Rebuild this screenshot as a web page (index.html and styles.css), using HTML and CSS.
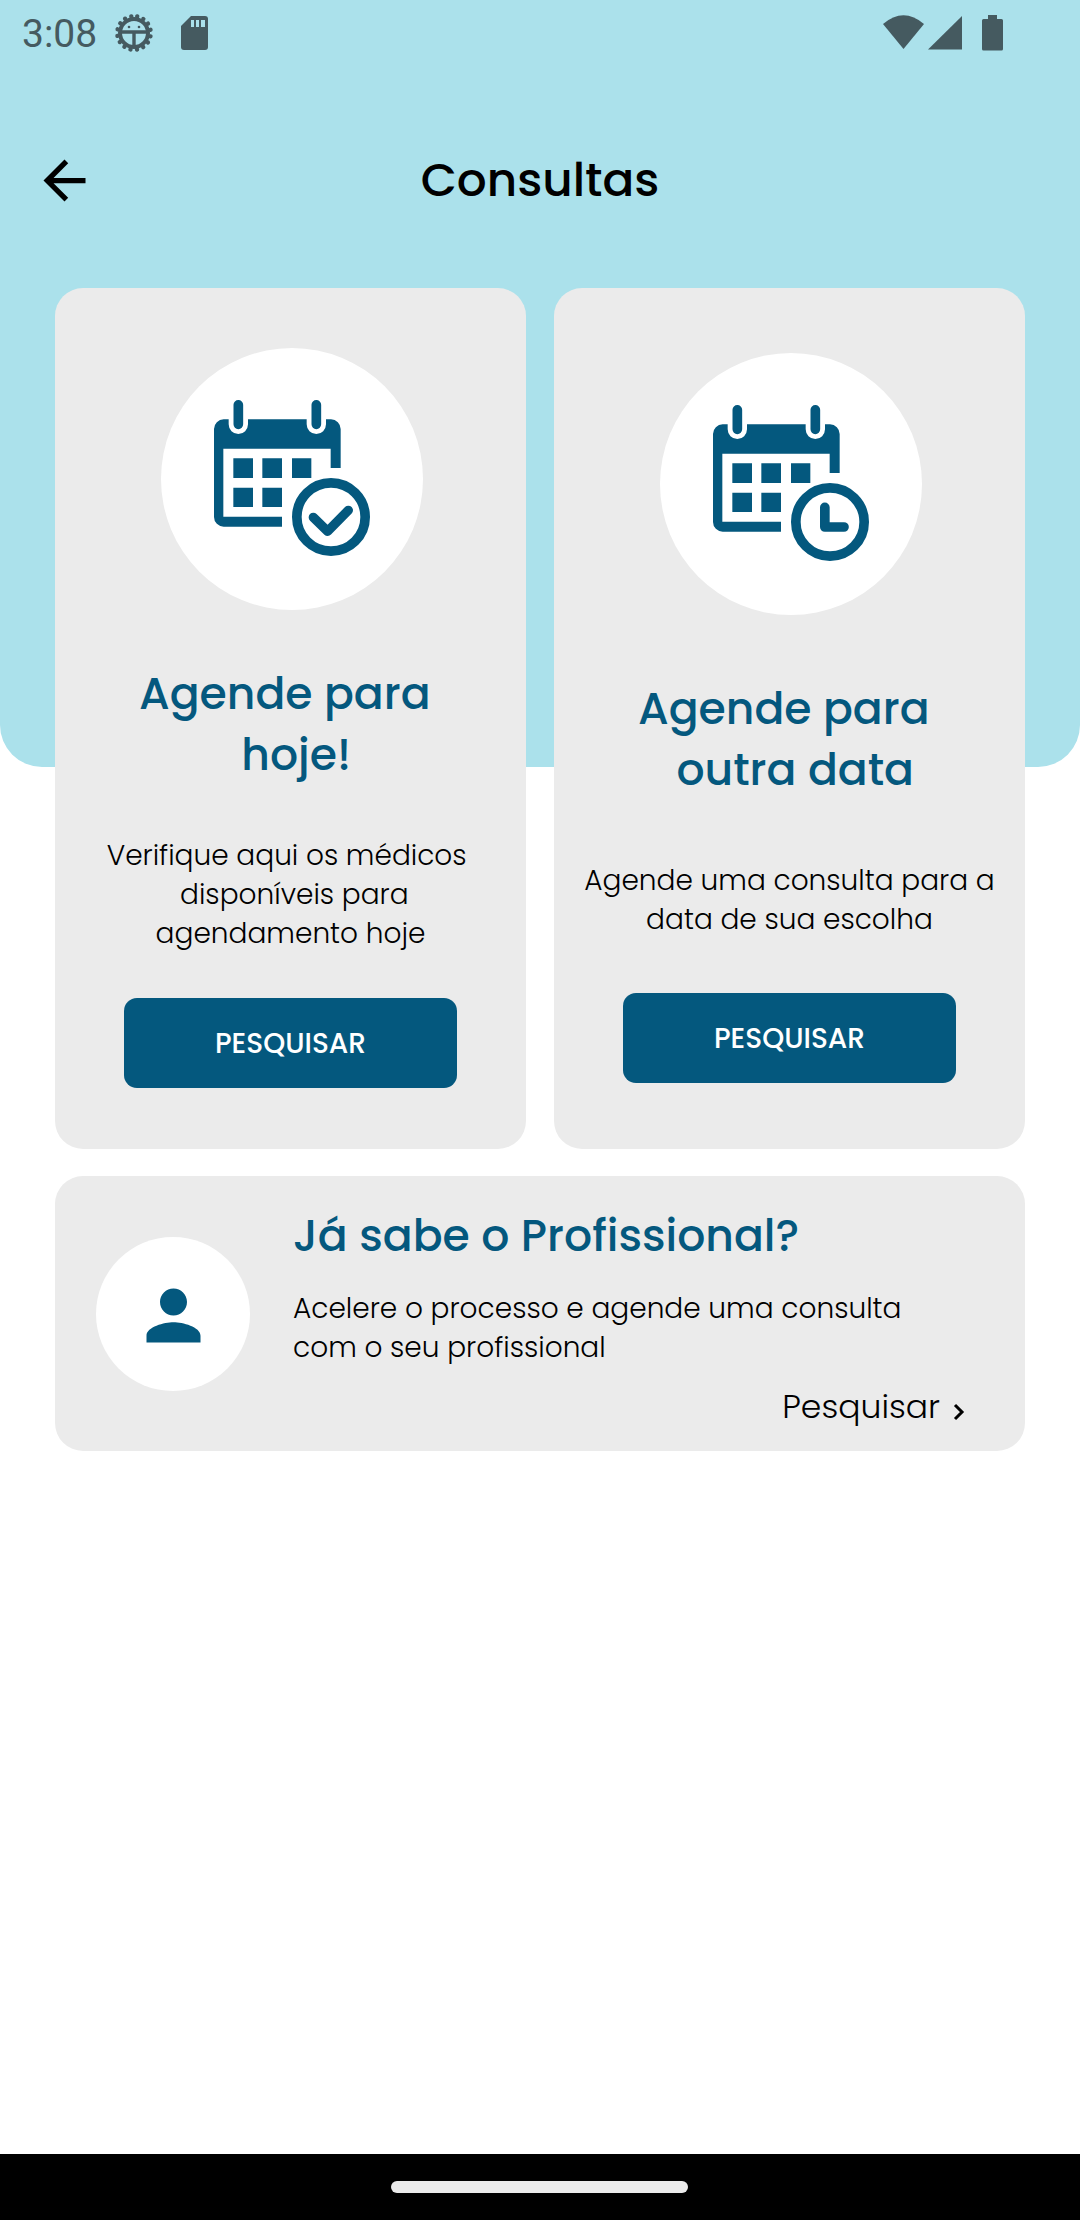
FILE: index.html
```html
<!DOCTYPE html>
<html lang="pt-BR">
<head>
<meta charset="utf-8">
<title>Consultas</title>
<link rel="stylesheet" href="styles.css">
</head>
<body>
<svg width="0" height="0" class="defs" aria-hidden="true">
  <defs>
    <g id="calendar">
      <path fill="#04587e" d="M220 238H542a29 29 0 0 1 29 29V384H541V326H219V530H395V560H220a29 29 0 0 1-29-29V267a29 29 0 0 1 29-29z"/>
      <g stroke="#fff" stroke-width="58" stroke-linecap="round"><path d="M264 190V253M498 190V253"/></g>
      <g stroke="#04587e" stroke-width="29" stroke-linecap="round"><path d="M264 194.500V253M498 194.500V253"/></g>
      <path fill="#04587e" d="M249 355h59v59h-59zM336 355h59v59h-59zM425 355h58v59h-58zM249 443h59v58h-59zM336 443h59v58h-59z"/>
      <circle cx="542" cy="531" r="102.500" fill="#fff" stroke="#04587e" stroke-width="29"/>
    </g>
  </defs>
</svg>
<div class="screen">
  <div class="backdrop"></div>
  <header class="status">
    <span class="time">3:08</span>
    <svg class="gear" viewBox="-20 -20 40 40" width="40" height="40">
      <circle r="16.800" fill="none" stroke="#455a60" stroke-width="4.400" stroke-linecap="round" stroke-dasharray="0.010 6.588" transform="rotate(-79)"/>
      <circle r="14" fill="none" stroke="#455a60" stroke-width="4"/>
      <path d="M-14-1H14M0-1V14" stroke="#455a60" stroke-width="3.400" fill="none"/>
      <circle cx="-5" cy="-6" r="1.300" fill="#455a60"/><circle cx="5" cy="-6" r="1.300" fill="#455a60"/>
    </svg>
    <svg class="sd" viewBox="0 0 27 34" width="27" height="34">
      <path fill="#455a60" d="M10 0H24a3 3 0 0 1 3 3V31a3 3 0 0 1-3 3H3a3 3 0 0 1-3-3V10z"/>
      <path fill="#abe1eb" d="M10 4h3v7h-3zM15 4h3v7h-3zM20 4h4v7h-4z"/>
    </svg>
    <svg class="signals" viewBox="883 15 121 36" width="121" height="36">
      <g fill="#455a60"><path d="M883 24Q903.500 6.500 924 24L903.500 49z"/><path d="M928 49.500L962 16V49.500z"/><path d="M988 15h9v4h4.500a1.500 1.500 0 0 1 1.500 1.500V49a1.500 1.500 0 0 1-1.500 1.500h-18A1.500 1.500 0 0 1 982 49V20.500a1.500 1.500 0 0 1 1.500-1.500H988z"/></g>
    </svg>
  </header>
  <div class="topbar">
    <svg viewBox="0 0 24 24" width="63" height="63"><path d="M20 11H7.830l5.590-5.590L12 4l-8 8 8 8 1.410-1.410L7.830 13H20v-2z"/></svg>
    <h1>Consultas</h1>
  </div>
  <main class="content">
    <div class="cards">
      <section class="card today">
        <div class="round">
          <svg viewBox="32 24 786 786" width="262" height="262"><use href="#calendar"/><path d="M489 532L532 574L594 511" fill="none" stroke="#04587e" stroke-width="28" stroke-linecap="round" stroke-linejoin="round"/></svg>
        </div>
        <h2>Agende para 
 hoje!</h2>
        <p>Verifique aqui os médicos 
 disponíveis para
agendamento hoje</p>
        <button>PESQUISAR</button>
      </section>
      <section class="card other">
        <div class="round">
          <svg viewBox="32 24 786 786" width="262" height="262"><use href="#calendar"/><path d="M526.500 487V546H584" fill="none" stroke="#04587e" stroke-width="29" stroke-linecap="round" stroke-linejoin="round"/></svg>
        </div>
        <h2>Agende para 
 outra data</h2>
        <p>Agende uma consulta para a
data de sua escolha</p>
        <button>PESQUISAR</button>
      </section>
    </div>
    <section class="professional">
      <div class="avatar">
        <svg viewBox="0 0 24 24" width="81" height="81"><path fill="#04587e" d="M12 12c2.210 0 4-1.790 4-4s-1.790-4-4-4-4 1.790-4 4 1.790 4 4 4zm0 2c-2.670 0-8 1.340-8 4v2h16v-2c0-2.660-5.330-4-8-4z"/></svg>
      </div>
      <div class="info">
        <h2>Já sabe o Profissional?</h2>
        <p>Acelere o processo e agende uma consulta
com o seu profissional</p>
        <a class="link">Pesquisar<svg viewBox="0 0 12 18" width="12" height="18"><path d="M2 2L9 9L2 16" fill="none" stroke="#000" stroke-width="3"/></svg></a>
      </div>
    </section>
  </main>
  <footer class="nav"><div class="pill"></div></footer>
</div>
</body>
</html>
```
FILE: styles.css
```css
* { box-sizing: border-box; margin: 0; padding: 0; }
body { background: #fff; color: #000; font-family: Poppins, Inter, "Open Sans", sans-serif; }
svg { display: block; flex: none; }
.defs { position: absolute; }
.screen { position: relative; width: 1080px; height: 2220px; display: flex; flex-direction: column; overflow: hidden; }
.backdrop { position: absolute; inset: 0 0 auto; height: 767px; background: #abe1eb; border-radius: 0 0 42px 42px; z-index: -1; }
.status { height: 100px; padding: 11px 76px 0 22px; display: flex; align-items: flex-start; }
.time { width: 92px; font: 400 39px/46px Roboto, sans-serif; color: #455a60; }
.gear { margin-top: 2px; }
.sd { margin: 5px 0 0 27px; }
.signals { margin: 4px 0 0 auto; }
.topbar { height: 188px; padding: 49px 33px 0; display: grid; grid-template-columns: 63px 1fr 63px; align-items: start; }
h1 { font-size: 46.900px; font-weight: 500; line-height: 62px; text-align: center; }
.content { padding: 0 55px; flex: 1; }
.cards { display: grid; grid-template-columns: 471px 471px; gap: 28px; }
.card { height: 861px; border-radius: 28px; background: #ebebeb; display: flex; flex-direction: column; align-items: center; text-align: center; }
.round { width: 262px; height: 262px; margin-left: 2px; border-radius: 50%; background: #fff; }
.today { padding-top: 60px; }
.other { padding-top: 65px; }
h2 { font-size: 44.100px; font-weight: 500; line-height: 61px; color: #04587e; white-space: pre; }
p { font-size: 28px; font-weight: 300; line-height: 39px; white-space: pre; }
.today h2 { margin: 53px 0 51px; }
.other h2 { margin: 63px 0 61px; }
button { width: 333px; height: 90px; padding-top: 1px; border: 0; border-radius: 13px; background: #04587e; color: #fff; font: 500 28px/90px Poppins, Inter, sans-serif; }
.today button { margin-top: 45px; }
.other button { margin-top: 54px; }
.professional { margin-top: 27px; height: 275px; border-radius: 28px; background: #ebebeb; padding: 0 60px 0 41px; display: flex; gap: 43px; }
.avatar { flex: none; margin-top: 61px; padding-top: 2px; width: 154px; height: 154px; border-radius: 50%; background: #fff; display: grid; place-items: center; }
.info { flex: 1; padding-top: 29px; display: flex; flex-direction: column; }
.info p { margin-top: 23px; }
.link { margin-top: 18px; display: flex; justify-content: flex-end; align-items: center; gap: 13px; font-size: 33px; font-weight: 300; line-height: 44px; }
.link svg { margin-top: 10px; }
.nav { height: 66px; background: #000; padding-top: 27px; }
.pill { width: 297px; height: 12px; margin-left: 391px; border-radius: 6px; background: #ebebeb; }
```
